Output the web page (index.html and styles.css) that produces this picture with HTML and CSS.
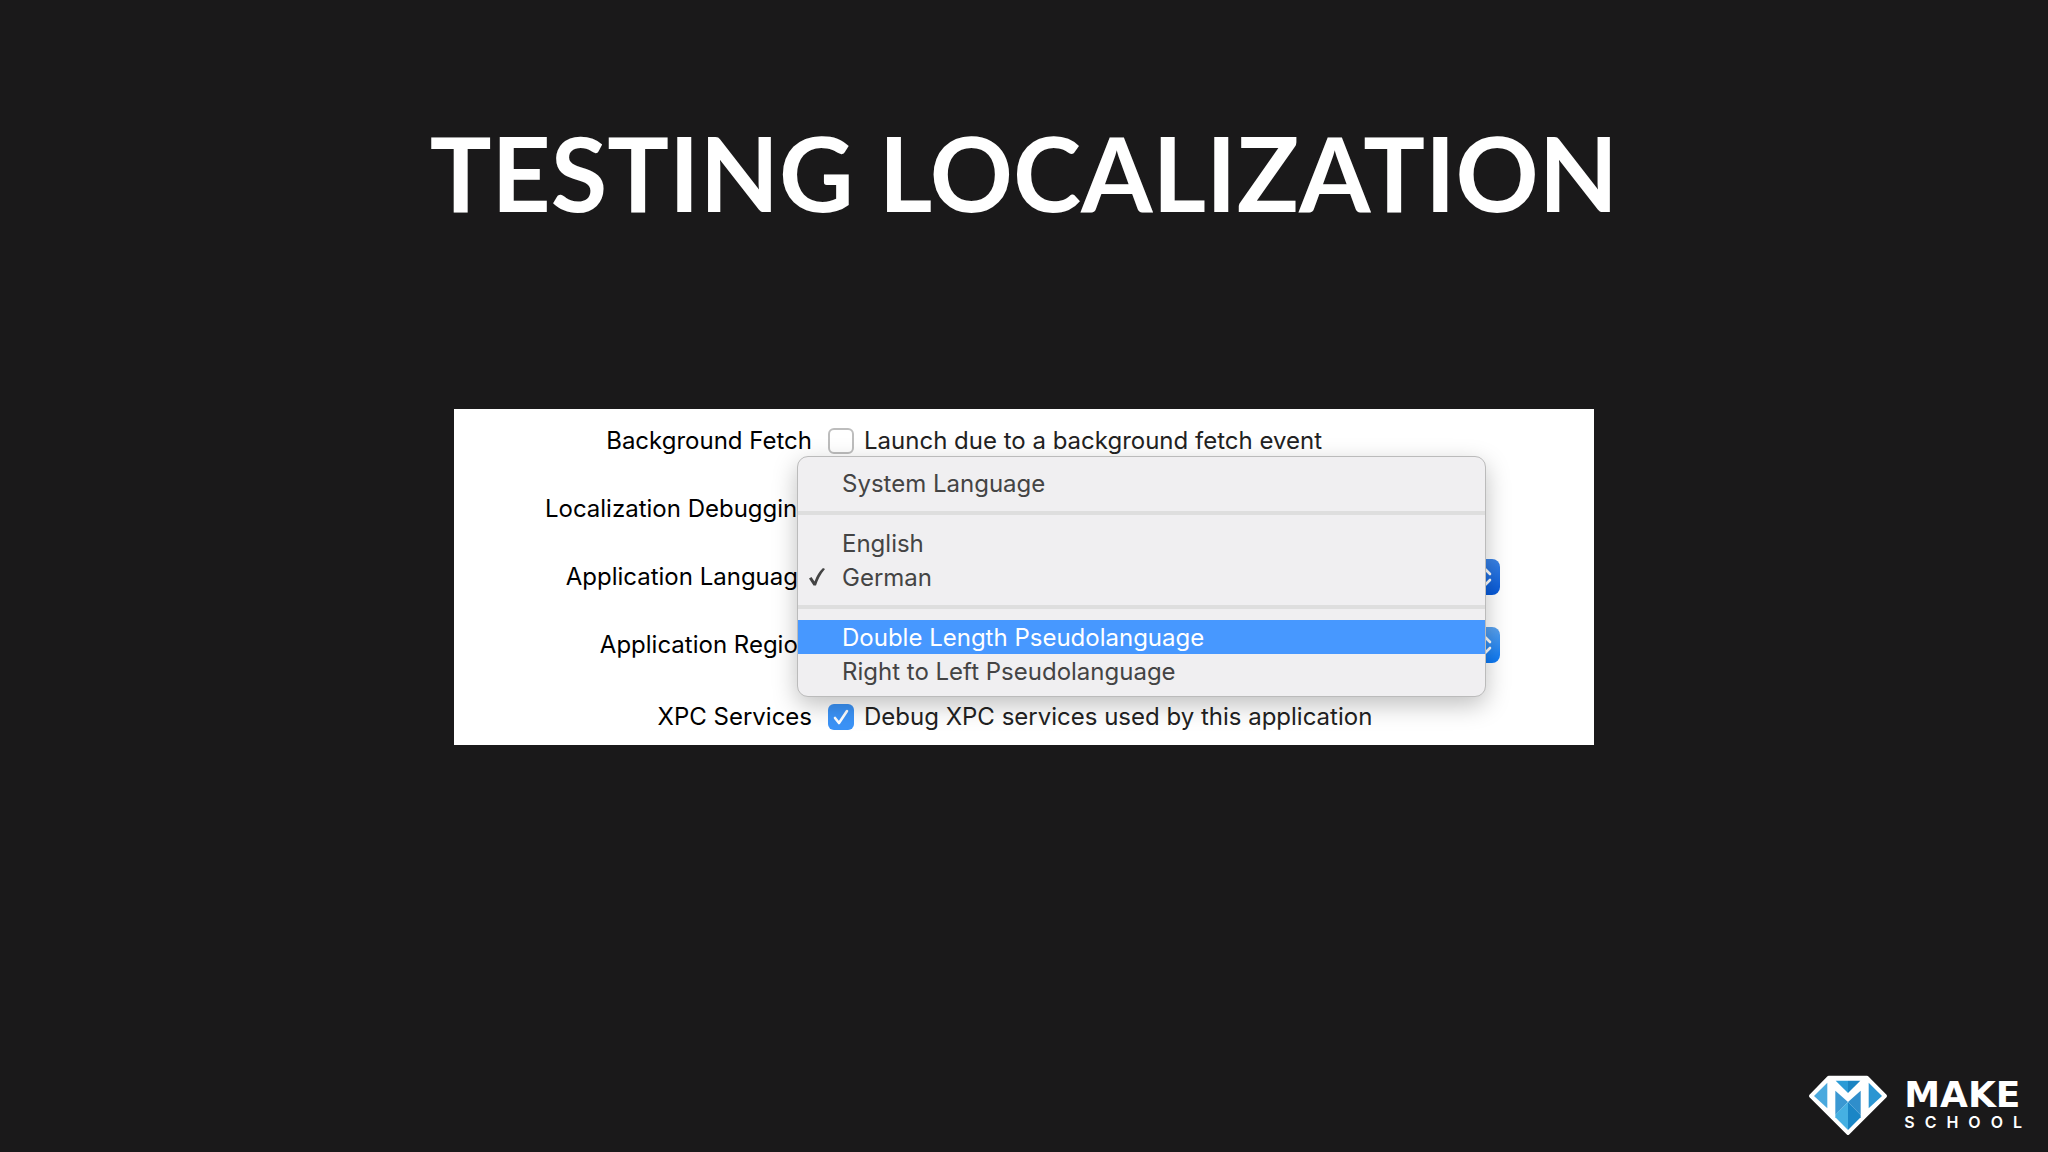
FILE: index.html
```html
<!DOCTYPE html>
<html lang="en">
<head>
    <meta charset="UTF-8">
    <meta name="viewport" content="width=device-width, initial-scale=1.0">
    <title>Testing Localization</title>
    <link rel="stylesheet" href="styles.css">
</head>
<body>
    <h1 class="slide-title">TESTING LOCALIZATION</h1>

    <main class="panel">
        <form class="settings">
            <span class="row-label">Background Fetch</span>
            <div class="control">
                <input type="checkbox" id="fetch" class="check">
                <label for="fetch">Launch due to a background fetch event</label>
            </div>

            <span class="row-label">Localization Debugging</span>
            <div class="control"></div>

            <label class="row-label" for="language">Application Language</label>
            <div class="control">
                <select id="language" class="popup active">
                    <option>German</option>
                </select>
                <div class="menu" role="menu">
                    <button type="button" class="menu-item" role="menuitem">System Language</button>
                    <hr class="menu-line">
                    <button type="button" class="menu-item" role="menuitem">English</button>
                    <button type="button" class="menu-item" role="menuitem">
                        <svg class="tick" viewBox="0 0 18 20" aria-hidden="true"><path d="M1 11.500 L3.500 10 L6.500 14.500 Q9.500 6 15 1 L17 2 Q11 9 8 18.500 H5.500 Z"/></svg>
                        German
                    </button>
                    <hr class="menu-line">
                    <button type="button" class="menu-item selected" role="menuitem">Double Length Pseudolanguage</button>
                    <button type="button" class="menu-item" role="menuitem">Right to Left Pseudolanguage</button>
                </div>
            </div>

            <label class="row-label" for="region">Application Region</label>
            <div class="control">
                <select id="region" class="popup">
                    <option>Germany</option>
                </select>
            </div>

            <span class="row-label last">XPC Services</span>
            <div class="control last">
                <input type="checkbox" id="xpc" class="check" checked>
                <label for="xpc">Debug XPC services used by this application</label>
            </div>
        </form>
    </main>

    <footer class="brand">
        <svg class="gem" viewBox="50 40 240 186" aria-hidden="true">
            <path class="gem-body" d="M112 50 H227 L282 106 L170 218 L58 106 Z"/>
            <path fill="#4aa9de" d="M68 106 L108 66 V143 Z"/>
            <path fill="#2b95d2" d="M272 106 L232 66 V143 Z"/>
            <path fill="#2b9bd6" d="M133 60 H170 V97 Z"/>
            <path fill="#1a84c2" d="M170 60 H207 L170 97 Z"/>
            <path fill="#3a98d2" d="M132 90 L170 124 L132 163 Z"/>
            <path fill="#2f8ecb" d="M208 90 L170 124 L208 163 Z"/>
            <path fill="#45b0e2" d="M132 163 L170 124 V208 L132 170 Z"/>
            <path fill="#1a86c6" d="M208 163 L170 124 V208 L208 170 Z"/>
        </svg>
        <div class="brand-text">
            <span class="brand-make">MAKE</span>
            <span class="brand-school">SCHOOL</span>
        </div>
    </footer>
</body>
</html>
```
FILE: styles.css
```css
* {
    box-sizing: border-box;
}
body {
    margin: 0;
    min-height: 100vh;
    display: flex;
    flex-direction: column;
    background: #1a191a;
    font-family: Inter, "Open Sans", sans-serif;
}
.slide-title {
    margin: 100px 0 0;
    color: #fff;
    font-family: Lato, sans-serif;
    font-size: 103px;
    font-weight: 700;
    line-height: 144px;
    text-align: center;
}
.panel {
    width: 100%;
    max-width: 1140px;
    margin: 165px auto 0;
    background: #fff;
}
.settings {
    display: grid;
    grid-template-columns: 358px 1fr;
    grid-auto-rows: minmax(36px, auto);
    column-gap: 16px;
    row-gap: 32px;
    padding: 14px 94px 10px 0;
    font-size: 24px;
    line-height: 36px;
    color: #000;
}
.row-label {
    align-self: center;
    text-align: right;
}
.control {
    position: relative;
    display: flex;
    align-items: center;
    gap: 10px;
    color: #222;
}
.last {
    margin-top: 4px;
}
.check {
    appearance: none;
    width: 26px;
    height: 26px;
    margin: 0;
    border: 2px solid #bdbdbd;
    border-radius: 6px;
    background: #fff;
}
.check:checked {
    border: none;
    background: #3b93f7 url("data:image/svg+xml,%3Csvg xmlns='http://www.w3.org/2000/svg' viewBox='0 0 26 26'%3E%3Cpath d='M7 14 L11 19 L19 7' fill='none' stroke='white' stroke-width='2.600' stroke-linecap='round' stroke-linejoin='round'/%3E%3C/svg%3E");
}
.popup {
    appearance: none;
    width: 100%;
    height: 36px;
    padding: 0 40px 0 16px;
    border: none;
    border-radius: 8px;
    color: #222;
    font: inherit;
    background:
        url("data:image/svg+xml,%3Csvg xmlns='http://www.w3.org/2000/svg' viewBox='0 0 32 36'%3E%3Cpath d='M10 15 L16 9 L22 15 M10 21 L16 27 L22 21' fill='none' stroke='white' stroke-width='2.600' stroke-linecap='round' stroke-linejoin='round'/%3E%3C/svg%3E") right / 32px 36px no-repeat,
        linear-gradient(#5aa2ee, #0a78f5) right / 32px 36px no-repeat,
        #fff;
}
.popup.active {
    background:
        url("data:image/svg+xml,%3Csvg xmlns='http://www.w3.org/2000/svg' viewBox='0 0 32 36'%3E%3Cpath d='M10 15 L16 9 L22 15 M10 21 L16 27 L22 21' fill='none' stroke='white' stroke-width='2.600' stroke-linecap='round' stroke-linejoin='round'/%3E%3C/svg%3E") right / 32px 36px no-repeat,
        linear-gradient(#3a83e6, #0558d8) right / 32px 36px no-repeat,
        #fff;
}
/* open menu lies over the popup button and its neighbours */
.menu {
    position: absolute;
    z-index: 1;
    top: -103px;
    left: -31px;
    right: 14px;
    padding: 9px 0 8px;
    border: 1px solid #bbb;
    border-radius: 11px;
    background: #f0eff1;
    box-shadow: 0 8px 24px rgba(0,0,0,0.25);
}
.menu-item {
    position: relative;
    display: block;
    width: 100%;
    height: 34px;
    padding: 0 0 0 44px;
    border: none;
    background: none;
    color: #444;
    font: inherit;
    text-align: left;
}
.menu-item.selected {
    background: #4798ff;
    color: #fff;
}
.menu-line {
    height: 4px;
    margin: 11px 0;
    border: none;
    background: #dedede;
}
.tick {
    position: absolute;
    left: 10px;
    top: 7px;
    width: 18px;
    height: 20px;
    fill: #444;
}
.brand {
    display: flex;
    justify-content: flex-end;
    align-items: center;
    gap: 16px;
    margin-top: auto;
    padding: 0 16px 16px 0;
    color: #fff;
}
.gem {
    width: 80px;
    height: 62px;
}
.gem-body {
    fill: #fff;
    stroke: #fff;
    stroke-width: 10;
    stroke-linejoin: round;
}
.brand-text {
    display: flex;
    flex-direction: column;
}
.brand-make {
    font-family: "DejaVu Sans", sans-serif;
    font-size: 36px;
    font-weight: 700;
    line-height: 34px;
}
.brand-school {
    font-size: 16px;
    font-weight: 600;
    line-height: 20px;
    letter-spacing: 10px;
}
```
